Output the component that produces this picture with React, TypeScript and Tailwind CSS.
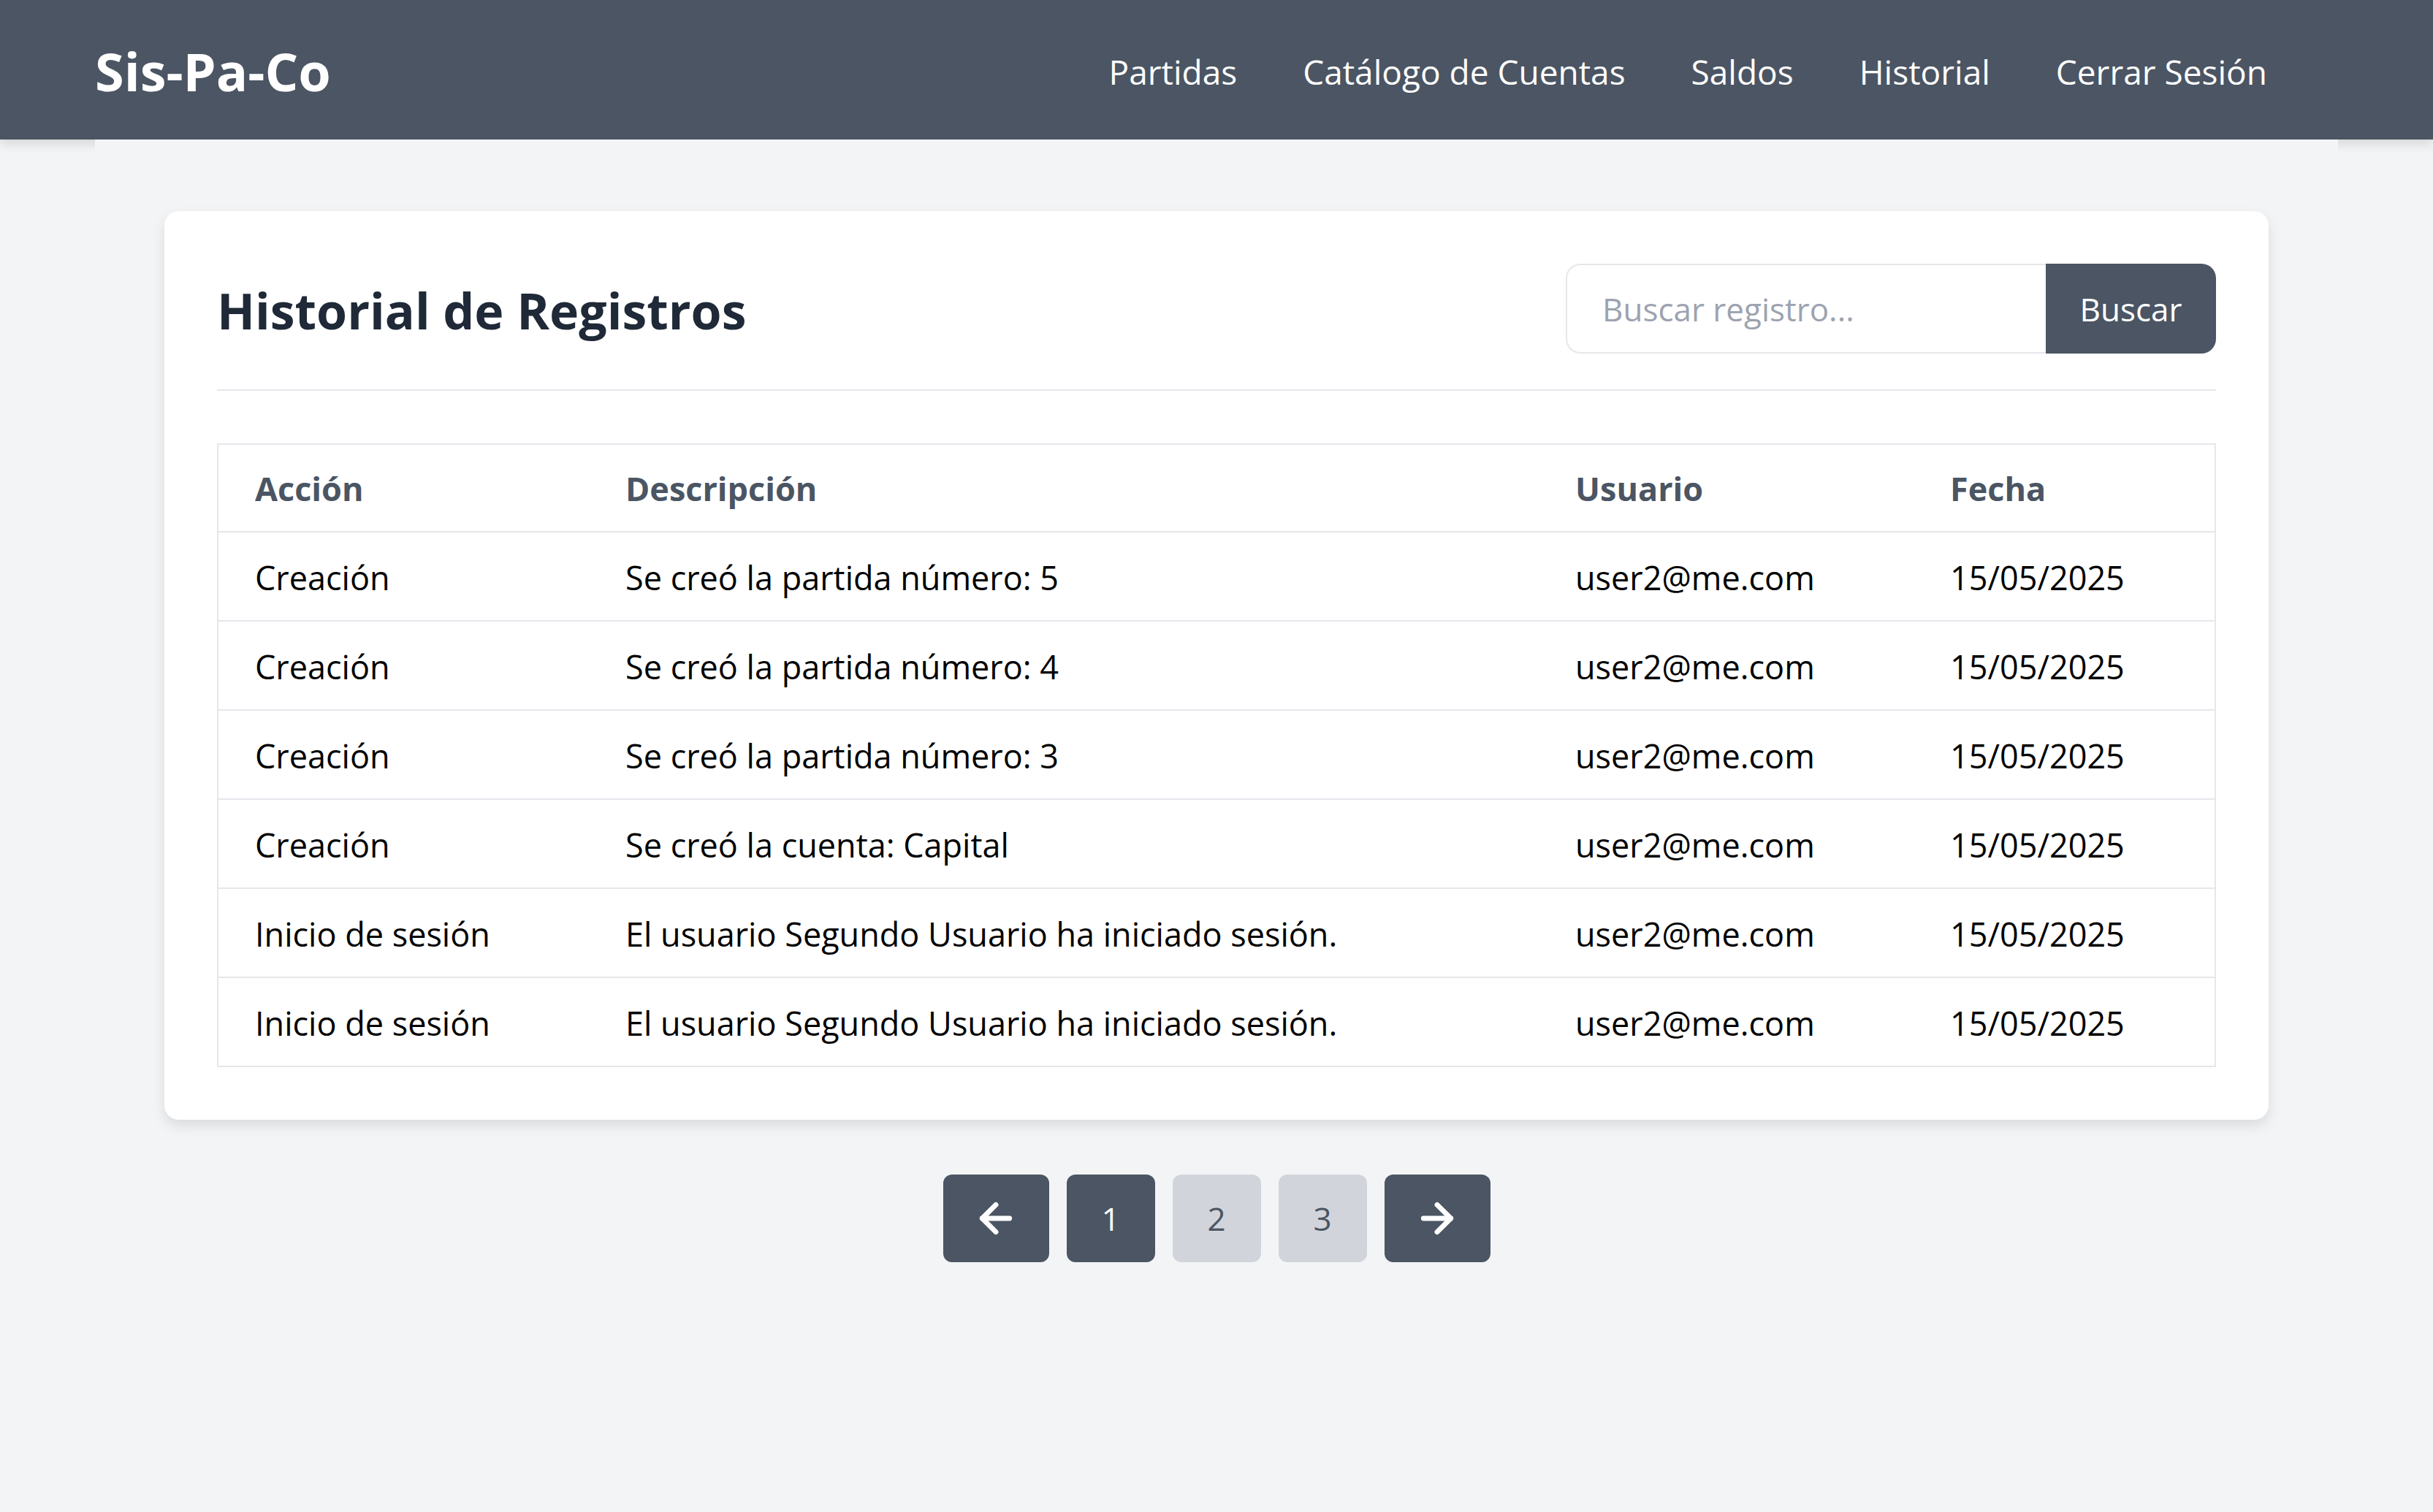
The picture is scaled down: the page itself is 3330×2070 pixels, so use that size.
import { ArrowLeft, ArrowRight } from "lucide-react";

const registros = [
  { accion: "Creación", descripcion: "Se creó la partida número: 5", usuario: "user2@me.com", fecha: "15/05/2025" },
  { accion: "Creación", descripcion: "Se creó la partida número: 4", usuario: "user2@me.com", fecha: "15/05/2025" },
  { accion: "Creación", descripcion: "Se creó la partida número: 3", usuario: "user2@me.com", fecha: "15/05/2025" },
  { accion: "Creación", descripcion: "Se creó la cuenta: Capital", usuario: "user2@me.com", fecha: "15/05/2025" },
  { accion: "Inicio de sesión", descripcion: "El usuario Segundo Usuario ha iniciado sesión.", usuario: "user2@me.com", fecha: "15/05/2025" },
  { accion: "Inicio de sesión", descripcion: "El usuario Segundo Usuario ha iniciado sesión.", usuario: "user2@me.com", fecha: "15/05/2025" },
];

const links = ["Partidas", "Catálogo de Cuentas", "Saldos", "Historial", "Cerrar Sesión"];

function Navbar() {
  return (
    <header className="bg-[#4b5563] shadow-[0_6px_14px_rgba(0,0,0,0.12)]">
      <div className="flex items-center justify-between h-[191px] px-[130px]">
        <a className="text-white font-bold text-[72px] leading-none mt-[3px]">Sis-Pa-Co</a>
        <nav className="flex gap-[90px] mr-[97px] mt-[4px]">
          {links.map((l) => (
            <a key={l} className="text-white text-[46px] leading-none">
              {l}
            </a>
          ))}
        </nav>
      </div>
    </header>
  );
}

function Pagination() {
  return (
    <div className="flex justify-center gap-[24px] mt-[75px]">
      <button className="w-[145px] h-[120px] rounded-[12px] bg-[#4b5563] text-white flex items-center justify-center">
        <ArrowLeft size={64} strokeWidth={2.6} />
      </button>
      <button className="w-[121px] h-[120px] rounded-[12px] bg-[#4b5563] text-white text-[44px]">1</button>
      <button className="w-[121px] h-[120px] rounded-[12px] bg-[#d1d5db] text-[#4b5563] text-[44px]">2</button>
      <button className="w-[121px] h-[120px] rounded-[12px] bg-[#d1d5db] text-[#4b5563] text-[44px]">3</button>
      <button className="w-[145px] h-[120px] rounded-[12px] bg-[#4b5563] text-white flex items-center justify-center">
        <ArrowRight size={64} strokeWidth={2.6} />
      </button>
    </div>
  );
}

export default function App() {
  return (
    <div className="min-h-screen bg-[#f3f4f6] font-['Open_Sans',sans-serif]">
      <Navbar />
      <main className="relative z-10 mx-[130px] bg-[#f3f4f6] pt-[98px] pb-[100px]">
        <div className="w-[2880px] mx-auto bg-white rounded-[20px] shadow-[0_8px_18px_rgba(0,0,0,0.1)] p-[72px]">
          <div className="flex items-center justify-between pb-[49px] border-b-2 border-[#e5e7eb]">
            <h1 className="text-[68px] font-bold text-[#1f2937] leading-none mt-[4px]">Historial de Registros</h1>
            <div className="flex">
              <input
                placeholder="Buscar registro..."
                className="w-[657px] h-[123px] border-2 border-r-0 border-[#e5e7eb] rounded-l-[20px] pl-[48px] text-[44px] placeholder:text-[#9ca3af] outline-none"
              />
              <button className="w-[233px] h-[123px] bg-[#4b5563] text-white text-[44px] rounded-r-[20px]">Buscar</button>
            </div>
          </div>
          <table className="w-full mt-[72px] border-2 border-[#e5e7eb] border-collapse text-left">
            <thead>
              <tr className="border-b-2 border-[#e5e7eb]">
                <th className="w-[508px] px-[50px] h-[120px] pt-[2px] text-[45px] font-bold text-[#4b5563]">Acción</th>
                <th className="w-[1300px] px-[50px] h-[120px] pt-[2px] text-[45px] font-bold text-[#4b5563]">Descripción</th>
                <th className="w-[513px] px-[50px] h-[120px] pt-[2px] text-[45px] font-bold text-[#4b5563]">Usuario</th>
                <th className="px-[50px] h-[120px] pt-[2px] text-[45px] font-bold text-[#4b5563]">Fecha</th>
              </tr>
            </thead>
            <tbody>
              {registros.map((r, i) => (
                <tr key={i} className="border-b-2 border-[#e5e7eb]">
                  <td className="px-[50px] h-[122px] pt-[4px] text-[45px] text-black">{r.accion}</td>
                  <td className="px-[50px] h-[122px] pt-[4px] text-[45px] text-black">{r.descripcion}</td>
                  <td className="px-[50px] h-[122px] pt-[4px] text-[45px] text-black">{r.usuario}</td>
                  <td className="px-[50px] h-[122px] pt-[4px] text-[45px] text-black">{r.fecha}</td>
                </tr>
              ))}
            </tbody>
          </table>
        </div>
        <Pagination />
      </main>
    </div>
  );
}
